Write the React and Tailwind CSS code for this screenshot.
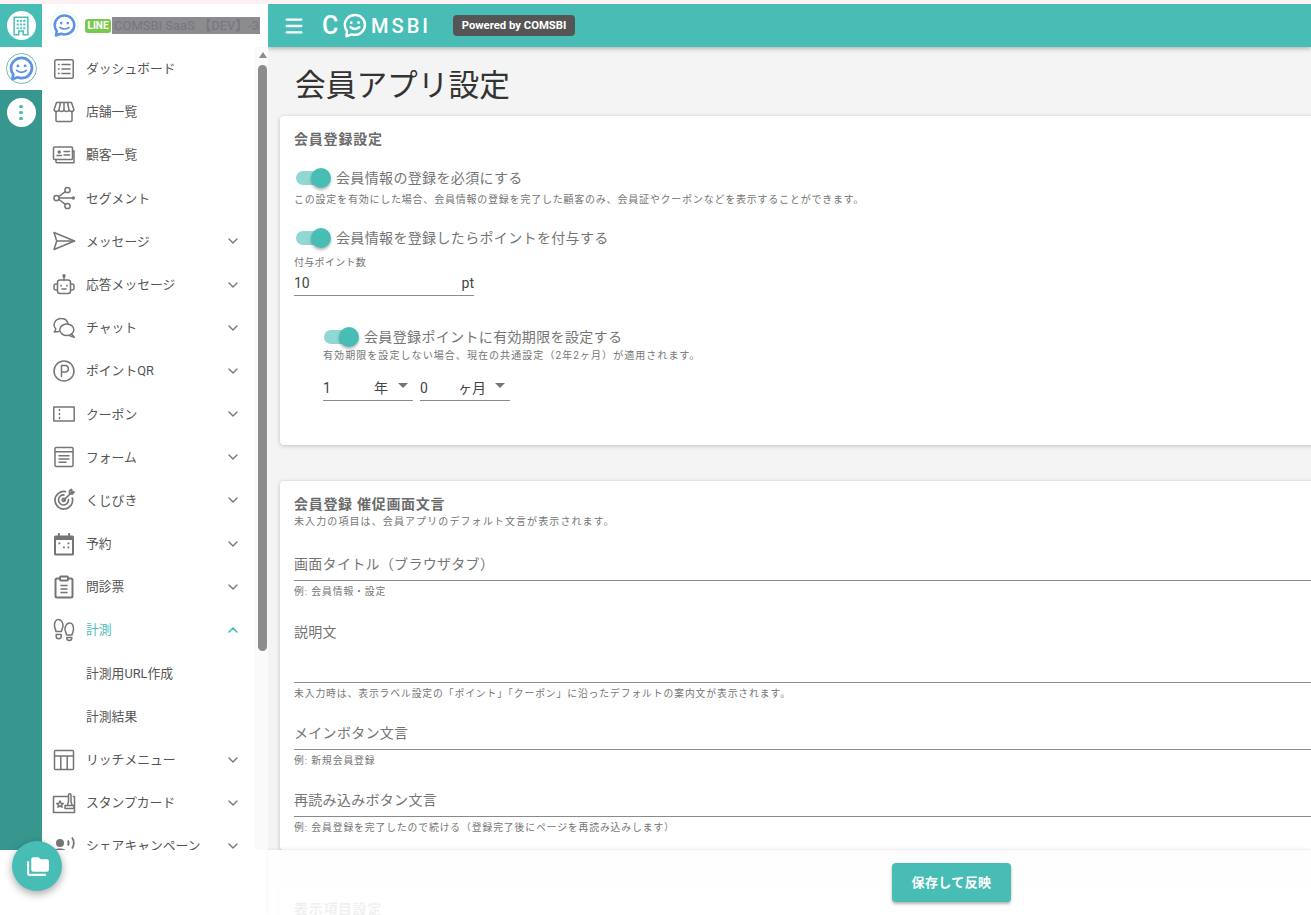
import React from "react";
import { ChevronDown, ChevronUp, Menu } from "lucide-react";

const iconCls = "w-[24px] h-[24px] text-[#757575] shrink-0";

function Ico({ children, sw = 1.5 }) {
  return (
    <svg viewBox="0 0 24 24" fill="none" stroke="currentColor" strokeWidth={sw} strokeLinecap="round" strokeLinejoin="round" className={iconCls}>
      {children}
    </svg>
  );
}

const icons = {
  dashboard: (
    <Ico>
      <rect x="2.8" y="2.8" width="18.4" height="18.4" rx="1.5" />
      <path d="M6.5 7.5h.6M6.5 12h.6M6.5 16.5h.6M10 7.5h8M10 12h8M10 16.5h8" />
    </Ico>
  ),
  store: (
    <Ico>
      <path d="M4 11v9.5a1 1 0 0 0 1 1h14a1 1 0 0 0 1-1V11" />
      <path d="M4.5 2.5h15L22 10a2.4 2.4 0 0 1-2.2 1.5A2.6 2.6 0 0 1 17 10a2.6 2.6 0 0 1-2.5 1.5A2.6 2.6 0 0 1 12 10a2.6 2.6 0 0 1-2.5 1.5A2.6 2.6 0 0 1 7 10a2.6 2.6 0 0 1-2.8 1.5A2.4 2.4 0 0 1 2 10z" />
      <path d="M8.5 2.5 7 10M12 2.5V10M15.5 2.5 17 10" />
    </Ico>
  ),
  customers: (
    <Ico>
      <rect x="1.5" y="4" width="19" height="12.5" rx="1" />
      <path d="M4 16.5V19a.8.8 0 0 0 .8.8h17.2V8h-1.5" />
      <path d="M12 8.5h5.5M12 12h5.5M5 12.5h4.5" />
      <circle cx="7.2" cy="9" r="1" fill="currentColor" />
    </Ico>
  ),
  segment: (
    <Ico>
      <circle cx="4.5" cy="12" r="2.6" />
      <circle cx="15.5" cy="4" r="2.6" />
      <circle cx="15.5" cy="20" r="2.6" />
      <circle cx="21.3" cy="12" r="1" />
      <path d="M7 10.5l6.3-4.8M7 13.5l6.3 4.8M7.1 12h13" />
    </Ico>
  ),
  send: (
    <Ico>
      <path d="M2 3.5 22.5 12 2 20.5l2.7-8.5z" />
      <path d="M4.7 12h17.8" />
    </Ico>
  ),
  bot: (
    <Ico>
      <rect x="5.5" y="7" width="13" height="13.5" rx="2.5" />
      <path d="M12 7V3.5" />
      <circle cx="12" cy="2.7" r="1" fill="currentColor" />
      <path d="M5.5 11H4a2 2 0 0 0-2 2v2a2 2 0 0 0 2 2h1.5M18.5 11H20a2 2 0 0 1 2 2v2a2 2 0 0 1-2 2h-1.5" />
      <path d="M9 12.3v.6M15 12.3v.6M10 16h4" />
    </Ico>
  ),
  chat: (
    <Ico>
      <path d="M7 15.5 2.3 16l1.6-3A6.3 6.3 0 0 1 2 9a6.8 6.8 0 0 1 7-6.5c3.4 0 6.2 2 6.9 4.8" />
      <ellipse cx="14.8" cy="13.8" rx="7" ry="5.8" />
      <path d="M19.5 18l2.8 3.2-5-1.6" />
    </Ico>
  ),
  point: (
    <Ico>
      <circle cx="12" cy="12" r="10" />
      <path d="M9.5 17.5v-11h3.6a3.2 3.2 0 0 1 0 6.5H9.5" />
    </Ico>
  ),
  coupon: (
    <Ico>
      <rect x="1.8" y="5" width="20.4" height="14" />
      <path d="M7.5 7.5v1M7.5 11.5v1M7.5 15.5v1" />
    </Ico>
  ),
  form: (
    <Ico>
      <rect x="3" y="2.5" width="18" height="19" rx="1" />
      <path d="M3 6.8h18M7 10.8h10M7 14h10M7 17.3h7" />
    </Ico>
  ),
  target: (
    <Ico sw={1.7}>
      <path d="M20.300 10A8.800 8.800 0 1 1 13.500 3.600" />
      <path d="M16.500 11.500a5 5 0 1 1-4.500-4.500" />
      <path d="M13 11a1.500 1.500 0 1 0 .2 1" />
      <path d="M12 12 19.500 4.500M17.500 5.500V3l2-1.500.5 2 2 .5-1.500 2H18z" />
    </Ico>
  ),
  calendar: (
    <svg viewBox="0 0 24 24" className={iconCls} fill="currentColor">
      <path fillRule="evenodd" d="M6 1h1.800v2.500h8.400V1H18v2.500h2.500A1.500 1.500 0 0 1 22 5v17a1.500 1.500 0 0 1-1.500 1.500h-17A1.500 1.500 0 0 1 2 22V5a1.500 1.500 0 0 1 1.500-1.500H6zM4 8v13.500h16V8z" />
      <path d="M6.500 10.500h1.800v1.800H6.500zM11 14.500h1.800v1.800H11zM15.500 10.500h1.800v1.800h-1.800zM15.500 14.500h1.800v1.800h-1.800z" />
    </svg>
  ),
  clipboard: (
    <Ico sw={2}>
      <path d="M8 3.500H5a1.500 1.500 0 0 0-1.500 1.500v16A1.500 1.500 0 0 0 5 22.500h14a1.500 1.500 0 0 0 1.500-1.500V5A1.500 1.500 0 0 0 19 3.500h-3" />
      <rect x="8" y="1.500" width="8" height="4" rx="1" />
      <path d="M9 10.500h6M9 14h6M9 17.500h6" strokeWidth="1.500" />
    </Ico>
  ),
  steps: (
    <Ico>
      <path d="M6.500 1.500C3.800 1.500 2.500 4.500 2.500 7.500c0 2 1 3.500 1.500 6h5.500c.3-2.500 1.500-4 1.500-6 0-3-1.800-6-4.500-6z" />
      <path d="M4.200 16.500h5v1.800a2.500 2.500 0 0 1-5 0z" />
      <path d="M17.500 5c2.700 0 4 3 4 6 0 2-1 3.500-1.500 6h-5.500c-.3-2.500-1.500-4-1.500-6 0-3 1.800-6 4.500-6z" />
      <path d="M14.800 19.500h5v.5a2.500 2.500 0 0 1-5 0z" />
    </Ico>
  ),
  table: (
    <Ico>
      <rect x="2.500" y="2.500" width="19" height="19" rx="1" />
      <path d="M2.500 8h19M8.800 8v13.500M15.200 8v13.500" />
    </Ico>
  ),
  stamp: (
    <Ico>
      <path d="M16 5.500H1.500v16h21v-16h-1" />
      <path d="M13 14.500h9v3h-9z" />
      <path d="M15.500 14.500c0-2 1-2.500 1-4.500V4a1.200 1.200 0 0 1 2.500 0v6c0 2 1 2.500 1 4.500" />
      <path d="M8 10l1 2.200 2.300.2-1.800 1.500.6 2.300-2.100-1.200-2.100 1.200.6-2.300-1.800-1.500 2.300-.2z" />
    </Ico>
  ),
  share: (
    <svg viewBox="0 0 24 24" className={iconCls} fill="currentColor">
      <circle cx="8" cy="9" r="4" />
      <path d="M1 19c0-3 3-4.500 7-4.500s7 1.500 7 4.500v2H1z" />
      <path d="M16 6.500a5.500 5.500 0 0 1 0 5" stroke="currentColor" strokeWidth="2" fill="none" />
      <path d="M20 3.500a10 10 0 0 1 0 11" stroke="currentColor" strokeWidth="1.800" fill="none" />
    </svg>
  ),
};

const navItems = [
  { label: "ダッシュボード", icon: "dashboard" },
  { label: "店舗一覧", icon: "store" },
  { label: "顧客一覧", icon: "customers" },
  { label: "セグメント", icon: "segment" },
  { label: "メッセージ", icon: "send", arrow: true },
  { label: "応答メッセージ", icon: "bot", arrow: true },
  { label: "チャット", icon: "chat", arrow: true },
  { label: "ポイントQR", icon: "point", arrow: true },
  { label: "クーポン", icon: "coupon", arrow: true },
  { label: "フォーム", icon: "form", arrow: true },
  { label: "くじびき", icon: "target", arrow: true },
  { label: "予約", icon: "calendar", arrow: true },
  { label: "問診票", icon: "clipboard", arrow: true },
  { label: "計測", icon: "steps", open: true },
  { label: "計測用URL作成", sub: true },
  { label: "計測結果", sub: true },
  { label: "リッチメニュー", icon: "table", arrow: true },
  { label: "スタンプカード", icon: "stamp", arrow: true },
  { label: "シェアキャンペーン", icon: "share", arrow: true },
];

function BotLogo({ size, ring = "#d5eeec" }) {
  return (
    <svg viewBox="0 0 32 32" width={size} height={size} className="shrink-0">
      <circle cx="16" cy="16" r="15.500" fill="#fff" stroke={ring} strokeWidth="0.700" />
      <path d="M16 5C10 5 5.200 9.800 5.200 15.600c0 2.500.9 4.800 2.300 6.600l-.9 4.800 5.300-1.900c1.300.5 2.700.8 4.100.8 6 0 10.800-4.500 10.800-10.300S22 5 16 5z" fill="#fff" stroke="#5c93e6" strokeWidth="2.800" strokeLinejoin="round" />
      <circle cx="12.300" cy="13.300" r="1.500" fill="#5c93e6" />
      <circle cx="19.700" cy="13.300" r="1.500" fill="#5c93e6" />
      <path d="M11 18c2.600 2.500 7.400 2.500 10 0" fill="none" stroke="#5c93e6" strokeWidth="1.800" strokeLinecap="round" />
    </svg>
  );
}

function Toggle({ label }) {
  return (
    <div className="flex items-center h-[20px]">
      <div className="relative w-[36px] h-[20px] shrink-0">
        <div className="absolute left-[1px] top-[3px] w-[30px] h-[14px] rounded-full bg-[#48bdb6] opacity-60" />
        <div className="absolute left-[16px] top-0 w-[20px] h-[20px] rounded-full bg-[#48bdb6] shadow-[0_2px_3px_rgba(0,0,0,0.3)]" />
      </div>
      <span className="ml-[5px] text-[14px] tracking-[0.350px] text-[#757575]">{label}</span>
    </div>
  );
}

function Select({ value, unit, unitPos }) {
  return (
    <div className="w-[90px] h-[24px] border-b border-[#8a8a8a] flex items-center text-[14px] text-[#444] relative">
      <span>{value}</span>
      <span className={`absolute ${unitPos}`}>{unit}</span>
      <span className="absolute right-[5px] top-[6px] w-0 h-0 border-x-[5px] border-x-transparent border-t-[5px] border-t-[#757575]" />
    </div>
  );
}

function TextField({ label, hint, tall }) {
  return (
    <div>
      <div className={`${tall ? "h-[68px] leading-[34px]" : "h-[33px] leading-[32px]"} border-b border-[#8a8a8a] text-[14px] tracking-[0.300px] text-[#757575]`}>
        {label}
      </div>
      <p className="mt-[4px] text-[9.800px] tracking-[0.900px] leading-[14px] text-[#757575]">{hint}</p>
    </div>
  );
}

export default function App() {
  return (
    <div className="relative w-[1311px] h-[915px] overflow-hidden bg-white font-['Roboto','Noto_Sans_CJK_JP',sans-serif]">
      <div className="h-[4px] bg-[#fdf1f4]" />
      <div className="flex h-[911px]">
        {/* rail */}
        <div className="w-[42px] h-[846px] shrink-0 bg-[#37978f] flex flex-col">
          <div className="h-[43px] bg-[#48bdb6] flex items-center justify-center">
            <div className="w-[29px] h-[29px] rounded-full bg-white flex items-center justify-center">
              <svg viewBox="0 0 24 24" className="w-[22px] h-[22px]" fill="none" stroke="#48bdb6" strokeWidth="1.600">
                <path d="M4.500 21.500V2.500h15v19h-5v-4h-5v4z" />
                <path d="M7.500 5.500h1.800v1.800H7.500zM11.100 5.500h1.800v1.800h-1.800zM14.700 5.500h1.800v1.800h-1.800zM7.500 9.500h1.800v1.800H7.500zM11.100 9.500h1.800v1.800h-1.800zM14.700 9.500h1.800v1.800h-1.800zM7.500 13.500h1.800v1.800H7.500zM11.100 13.500h1.800v1.800h-1.800zM14.700 13.500h1.800v1.800h-1.800z" fill="#48bdb6" strokeWidth="0.400" />
              </svg>
            </div>
          </div>
          <div className="h-[43px] bg-white flex items-center justify-center">
            <BotLogo size={31} ring="#37978f" />
          </div>
          <div className="h-[45px] flex items-center justify-center">
            <div className="w-[29px] h-[29px] rounded-full bg-white flex flex-col items-center justify-center gap-[2.500px]">
              <span className="w-[3.500px] h-[3.500px] rounded-full bg-[#48bdb6]" />
              <span className="w-[3.500px] h-[3.500px] rounded-full bg-[#48bdb6]" />
              <span className="w-[3.500px] h-[3.500px] rounded-full bg-[#48bdb6]" />
            </div>
          </div>
        </div>

        {/* sidebar */}
        <div className="w-[226px] h-[846px] shrink-0 flex flex-col overflow-hidden bg-white">
          <div className="h-[43px] shrink-0 flex items-center pl-[8px]">
            <BotLogo size={29} />
            <span className="ml-[6px] w-[26px] h-[14px] rounded-[3px] bg-[#7ac94f] text-white text-[10px] font-bold leading-[14px] text-center shrink-0">LINE</span>
            <span className="ml-[1px] w-[148px] h-[17px] bg-[#8b8b90] text-[#77777b] text-[13px] leading-[17px] whitespace-nowrap overflow-hidden pl-[2px]">COMSBI SaaS 【DEV】-3</span>
          </div>
          <div className="flex flex-1 min-h-0">
            <nav className="w-[212px] shrink-0 pl-[10px] overflow-hidden">
              {navItems.map((item) => (
                <div key={item.label} className="h-[43.200px] flex items-center">
                  {item.icon ? icons[item.icon] : <span className="w-[24px] shrink-0" />}
                  <span className={`ml-[10px] flex-1 text-[12.800px] whitespace-nowrap ${item.open ? "text-[#48bdb6]" : "text-[#555]"}`}>
                    {item.label}
                  </span>
                  {item.arrow && <ChevronDown size={16} strokeWidth={2} className="text-[#757575] mr-[13px] shrink-0" />}
                  {item.open && <ChevronUp size={16} strokeWidth={2.500} className="text-[#48bdb6] mr-[13px] shrink-0" />}
                </div>
              ))}
            </nav>
            <div className="w-[14px] shrink-0 bg-[#fafafa] flex flex-col items-center pt-[5px] pl-[3px]">
              <span className="w-0 h-0 border-x-[4px] border-x-transparent border-b-[6px] border-b-[#8c8c8c]" />
              <span className="mt-[7px] w-[9px] h-[586px] rounded-full bg-[#8c8c8c]" />
            </div>
          </div>
        </div>

        {/* main */}
        <div className="flex-1 min-w-0 h-full overflow-hidden bg-[#f4f4f4]">
          <header className="h-[43px] bg-[#48bdb6] flex items-center pl-[15px] shadow-[0_2px_4px_rgba(0,0,0,0.25)] relative">
            <Menu size={22} strokeWidth={2.500} className="text-white" />
            <div className="ml-[18px] w-[108px] flex items-center text-white font-medium leading-none">
              <span className="text-[25px] ml-[-1px]">C</span>
              <svg viewBox="0 0 32 32" className="w-[26px] h-[29px] ml-[4px] mr-[3px]" fill="none" stroke="#fff" strokeWidth="3" strokeLinecap="round" strokeLinejoin="round">
                <path d="M16 3C9 3 3.500 8.500 3.500 15.500c0 3 1 5.500 2.800 7.500l-.8 6.500 6.500-2.500c1.200.4 2.500.6 4 .6 7 0 12.500-5.500 12.500-12.500S23 3 16 3z" />
                <path d="M10.500 18c3 3 8 3 11 0" />
                <circle cx="11.500" cy="12.500" r="1" fill="#fff" strokeWidth="1.500" />
                <circle cx="20.500" cy="12.500" r="1" fill="#fff" strokeWidth="1.500" />
              </svg>
              <span className="text-[20px] tracking-[3px] whitespace-nowrap">MSBI</span>
            </div>
            <span className="ml-[22px] w-[122px] h-[21px] rounded-[4px] bg-[#555] text-white text-[11.300px] font-bold leading-[21px] text-center whitespace-nowrap">Powered by COMSBI</span>
          </header>

          <div className="pl-[12px]">
            <h1 className="pl-[15px] pt-[19px] h-[69px] text-[30.700px] leading-[39px] font-normal text-[#333]">会員アプリ設定</h1>

            <section className="w-[1060px] h-[329px] bg-white rounded-[4px] shadow-[0_1px_4px_rgba(0,0,0,0.22)] pl-[14px] pt-[13px]">
              <h2 className="text-[14px] tracking-[0.800px] leading-[20px] font-bold text-[#6b6b6b]">会員登録設定</h2>
              <div className="mt-[19px] ml-[1px]">
                <Toggle label="会員情報の登録を必須にする" />
                <p className="mt-[5px] ml-[-1px] text-[10px] tracking-[0.780px] leading-[14px] text-[#757575]">
                  この設定を有効にした場合、会員情報の登録を完了した顧客のみ、会員証やクーポンなどを表示することができます。
                </p>
              </div>
              <div className="mt-[21px] ml-[1px]">
                <Toggle label="会員情報を登録したらポイントを付与する" />
                <p className="mt-[8px] ml-[-1px] text-[10px] tracking-[0.300px] leading-[14px] text-[#757575]">付与ポイント数</p>
                <div className="mt-[1px] ml-[-1px] w-[180px] h-[25px] border-b border-[#8a8a8a] flex items-center justify-between text-[14px] text-[#444]">
                  <span>10</span>
                  <span>pt</span>
                </div>
              </div>
              <div className="ml-[29px] mt-[31px]">
                <Toggle label="会員登録ポイントに有効期限を設定する" />
                <p className="mt-[2px] text-[10px] tracking-[1.070px] leading-[14px] text-[#757575]">
                  有効期限を設定しない場合、現在の共通設定（2年2ヶ月）が適用されます。
                </p>
                <div className="mt-[14px] flex gap-[7px]">
                  <Select value="1" unit="年" unitPos="left-[51px]" />
                  <Select value="0" unit="ヶ月" unitPos="left-[38px]" />
                </div>
              </div>
            </section>

            <section className="mt-[36px] w-[1060px] h-[369px] bg-white rounded-[4px] shadow-[0_1px_4px_rgba(0,0,0,0.22)] pl-[14px] pt-[13px]">
              <h2 className="text-[14px] tracking-[0.700px] leading-[20px] font-bold text-[#6b6b6b]">会員登録 催促画面文言</h2>
              <p className="mt-[1px] text-[10px] tracking-[1.100px] leading-[14px] text-[#757575]">未入力の項目は、会員アプリのデフォルト文言が表示されます。</p>
              <div className="mt-[19px] flex flex-col gap-[16px]">
                <TextField label="画面タイトル（ブラウザタブ）" hint="例: 会員情報・設定" />
                <TextField tall label="説明文" hint="未入力時は、表示ラベル設定の「ポイント」「クーポン」に沿ったデフォルトの案内文が表示されます。" />
                <TextField label="メインボタン文言" hint="例: 新規会員登録" />
                <TextField label="再読み込みボタン文言" hint="例: 会員登録を完了したので続ける（登録完了後にページを再読み込みします）" />
              </div>
            </section>

            <section className="mt-[36px] w-[1060px] h-[200px] bg-white rounded-[4px] shadow-[0_1px_4px_rgba(0,0,0,0.22)] pl-[14px] pt-[13px]">
              <h2 className="text-[14px] tracking-[0.700px] leading-[20px] font-bold text-[#6b6b6b]">表示項目設定</h2>
            </section>
          </div>
        </div>
      </div>

      {/* bottom action bar */}
      <div className="absolute left-[268px] right-0 bottom-0 h-[65px] bg-white/90 shadow-[0_-1px_3px_rgba(0,0,0,0.08)] flex pl-[624px] pt-[13px]">
        <button className="w-[119px] h-[39px] rounded-[4px] bg-[#48bdb6] text-white text-[13px] font-bold tracking-[0.400px] shadow-[0_2px_3px_rgba(0,0,0,0.3)]">
          保存して反映
        </button>
      </div>

      <button className="absolute left-[12px] top-[841px] w-[50px] h-[50px] rounded-full bg-[#48bdb6] flex items-center justify-center shadow-[0_3px_8px_rgba(0,0,0,0.35)]">
        <svg viewBox="0 0 24 24" className="w-[25px] h-[25px]" fill="#fff">
          <path d="M2 7h2v12h16v2H4a2 2 0 0 1-2-2z" />
          <path d="M6 5a2 2 0 0 1 2-2h5l2 2h6a2 2 0 0 1 2 2v8a2 2 0 0 1-2 2H8a2 2 0 0 1-2-2z" />
        </svg>
      </button>
    </div>
  );
}
